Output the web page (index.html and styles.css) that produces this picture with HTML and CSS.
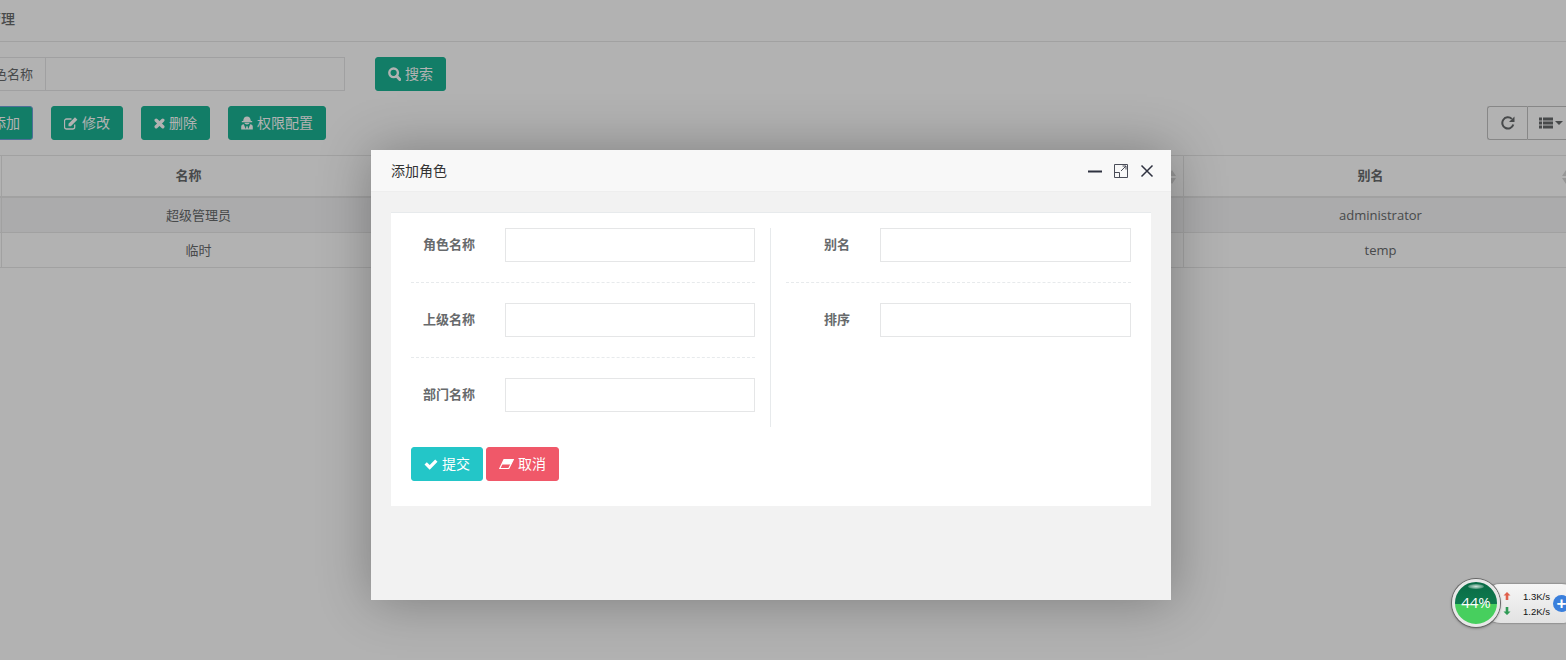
FILE: index.html
```html
<!DOCTYPE html>
<html lang="zh-CN">
<head>
<meta charset="utf-8">
<title>角色管理</title>
<link rel="stylesheet" href="styles.css">
</head>
<body>
<div class="page">
  <header class="page-head">角色管理</header>
  <form class="search-row">
    <div class="input-group">
      <span class="addon">角色名称</span>
      <span class="search-input"></span>
    </div>
    <button type="button" class="btn btn-primary">
      <svg class="ico ico-13" viewBox="0 0 13 14"><circle cx="5.600" cy="5.800" r="4.300" fill="none" stroke="currentColor" stroke-width="2.400"/><path d="M8.800 9.200l3 3.300" stroke="currentColor" stroke-width="3" stroke-linecap="round"/></svg>
      <span class="btn-text">搜索</span>
    </button>
  </form>
  <div class="toolbar">
    <div class="tool-left">
      <button type="button" class="btn btn-primary btn-focus">
        <svg class="ico ico-11" viewBox="0 0 11 14"><path d="M4 2.500h3v3h3.500v3H7v3H4v-3H.5v-3H4z" fill="currentColor"/></svg>
        <span class="btn-text">添加</span>
      </button>
      <button type="button" class="btn btn-primary">
        <svg class="ico" viewBox="0 0 14 14"><path d="M10.700 8.500V11a2 2 0 0 1-2 2H2.500a2 2 0 0 1-2-2V5a2 2 0 0 1 2-2h5" fill="none" stroke="currentColor" stroke-width="1.300"/><path d="M4.500 7.800L11 1.300l2.400 2.400-6.500 6.500H4.500z" fill="currentColor"/></svg>
        <span class="btn-text">修改</span>
      </button>
      <button type="button" class="btn btn-primary">
        <svg class="ico ico-11" viewBox="0 0 11 14"><path d="M2.200 4.200l6.600 6.600M8.800 4.200l-6.600 6.600" stroke="currentColor" stroke-width="3.400" stroke-linecap="round"/></svg>
        <span class="btn-text">删除</span>
      </button>
      <button type="button" class="btn btn-primary">
        <svg class="ico ico-12" viewBox="0 0 12 14"><path d="M2.200 5C2.400 1.800 3.800.5 6 .5s3.600 1.300 3.800 4.500h1.400v1.200H.8V5z" fill="currentColor"/><path d="M3.400 6.800h5.200c-.2 1-1.200 1.700-2.600 1.700s-2.400-.7-2.600-1.700z" fill="currentColor"/><path d="M.2 13.500v-2.800c0-1.400.9-2.300 2.600-2.500L4.700 13 5.600 10h.8l.9 3 1.900-4.800c1.700.2 2.600 1.100 2.600 2.500v2.800z" fill="currentColor"/></svg>
        <span class="btn-text">权限配置</span>
      </button>
    </div>
    <div class="tool-right">
      <button type="button" class="tool-btn tool-refresh">
        <svg class="ico" viewBox="0 0 14 14"><path d="M12.300 8.500A5.600 5.600 0 1 1 10.800 2.900" fill="none" stroke="currentColor" stroke-width="2"/><path d="M13.500 .5v5.500H8z" fill="currentColor"/></svg>
      </button>
      <button type="button" class="tool-btn tool-list">
        <svg class="ico" viewBox="0 0 14 14"><path d="M0 1.500h3v3H0zM4 1.500h10v3H4zM0 5.500h3v3H0zM4 5.500h10v3H4zM0 9.500h3v3H0zM4 9.500h10v3H4z" fill="currentColor"/></svg>
        <span class="caret"></span>
      </button>
    </div>
  </div>
  <table class="data-table">
    <colgroup>
      <col class="col-check"><col class="col-data"><col class="col-data"><col class="col-data"><col class="col-data">
    </colgroup>
    <thead>
      <tr>
        <th></th>
        <th><span class="th-label">名称</span></th>
        <th></th>
        <th><svg class="sort" viewBox="0 0 10 16"><path d="M5 1l4 6H1zM5 15l4-6H1z" fill="currentColor"/></svg></th>
        <th><span class="th-label">别名</span><svg class="sort" viewBox="0 0 10 16"><path d="M5 1l4 6H1zM5 15l4-6H1z" fill="currentColor"/></svg></th>
      </tr>
    </thead>
    <tbody>
      <tr><td></td><td class="cell-cjk">超级管理员</td><td></td><td></td><td>administrator</td></tr>
      <tr><td></td><td class="cell-cjk">临时</td><td></td><td></td><td>temp</td></tr>
    </tbody>
  </table>
</div>

<div class="shade"></div>

<section class="dialog">
  <div class="dialog-title">
    <span class="dialog-name">添加角色</span>
    <div class="dialog-tools">
      <svg class="tool-min" viewBox="0 0 14 14"><path d="M0 7.500h14" stroke="currentColor" stroke-width="2"/></svg>
      <svg class="tool-max" viewBox="0 0 14 14"><path d="M.5.500h13v13H.5zM.5 8.500h5v5M7 7l5-5M8.500 2H12v3.500" fill="none" stroke="currentColor" stroke-width="1"/></svg>
      <svg class="tool-close" viewBox="0 0 14 14"><path d="M1.500 1.500l11 11M12.500 1.500l-11 11" stroke="currentColor" stroke-width="1.500"/></svg>
    </div>
  </div>
  <div class="dialog-body">
    <div class="panel">
      <div class="form-cols">
        <div class="form-col form-col-left">
          <div class="field"><label>角色名称</label><span class="text-input"></span></div>
          <div class="field"><label>上级名称</label><span class="text-input"></span></div>
          <div class="field"><label>部门名称</label><span class="text-input"></span></div>
        </div>
        <div class="form-col form-col-right">
          <div class="field"><label>别名</label><span class="text-input"></span></div>
          <div class="field field-plain"><label>排序</label><span class="text-input"></span></div>
        </div>
      </div>
      <div class="form-actions">
        <button type="button" class="btn btn-info">
          <svg class="ico" viewBox="0 0 14 14"><path d="M.5 7.500l2.300-2.300 2.900 2.900 5.500-5.600 2.300 2.300-7.800 7.900z" fill="currentColor"/></svg>
          <span class="btn-text">提交</span>
        </button>
        <button type="button" class="btn btn-danger">
          <svg class="ico ico-15" viewBox="0 0 15 14"><path d="M5 2.500h9.300L9.800 11.500H.8z" fill="none" stroke="currentColor" stroke-width="1.200"/><path d="M5 2.500h9.300L11.800 7.500H2.800z" fill="currentColor"/></svg>
          <span class="btn-text">取消</span>
        </button>
      </div>
    </div>
  </div>
</section>

<aside class="speed-widget">
  <div class="speed-pill">
    <div class="speed-rates">
      <div class="rate"><svg class="rate-arrow rate-up" viewBox="0 0 8 8"><path d="M4 0l3.500 3.500H5.300V8H2.700V3.500H.5z" fill="currentColor"/></svg><span>1.3K/s</span></div>
      <div class="rate"><svg class="rate-arrow rate-down" viewBox="0 0 8 8"><path d="M4 8L.5 4.500h2.200V0h2.600v4.500h2.200z" fill="currentColor"/></svg><span>1.2K/s</span></div>
    </div>
    <span class="speed-plus">+</span>
  </div>
  <div class="speed-ball"><span class="speed-gloss"></span><span class="speed-text">44%</span></div>
</aside>
</body>
</html>
```
FILE: styles.css
```css
* { box-sizing: border-box; }
html, body { margin: 0; height: 660px; overflow: hidden; }
body {
  position: relative;
  width: 1566px;
  background: #fff;
  color: #676a6c;
  font-family: "Open Sans", "Noto Sans CJK SC", sans-serif;
  font-size: 13px;
}
.page { width: 1622px; margin-left: -41px; }
.page-head {
  height: 42px;
  border-bottom: 1px solid #e7e7e7;
  font-size: 14px;
  font-weight: 500;
  line-height: 38px;
}
.search-row { display: flex; gap: 30px; padding: 15px 0 0 9px; }
.input-group { display: flex; height: 34px; }
.addon {
  padding: 0 12px;
  border: 1px solid #e5e6e7;
  line-height: 32px;
  background: #fff;
}
.search-input { width: 299px; border: 1px solid #e5e6e7; border-left: 0; }
.btn {
  display: inline-flex;
  align-items: center;
  justify-content: center;
  gap: 4px;
  height: 34px;
  padding: 0 12px;
  border: 1px solid transparent;
  border-radius: 3px;
  font: inherit;
  font-size: 14px;
  color: #fff;
  white-space: nowrap;
}
.btn-text { line-height: 20px; padding-bottom: 1px; }
.btn-primary { background: #1ab394; border-color: #1ab394; }
.btn-info { background: #23c6c8; border-color: #23c6c8; }
.btn-danger { background: #f05869; border-color: #f05869; }
.btn-focus { border-color: #6f9fd8; }
.ico { width: 14px; height: 14px; flex: none; }
.ico-11 { width: 11px; }
.ico-12 { width: 12px; }
.ico-13 { width: 13px; }
.ico-15 { width: 15px; }
.toolbar {
  display: flex;
  justify-content: space-between;
  align-items: center;
  padding: 15px 0 0 5px;
}
.tool-left { display: flex; gap: 18px; }
.tool-right { display: flex; }
.tool-btn {
  display: inline-flex;
  align-items: center;
  justify-content: center;
  height: 34px;
  border: 1px solid #c2c2c2;
  background: #fff;
  color: #676a6c;
  padding: 0;
}
.tool-refresh { width: 40px; border-radius: 3px 0 0 3px; border-right: 0; }
.tool-list { width: 54px; border-radius: 0 3px 3px 0; gap: 2px; justify-content: flex-start; padding-left: 11px; }
.caret {
  width: 0;
  height: 0;
  border-left: 4px solid transparent;
  border-right: 4px solid transparent;
  border-top: 4px solid #676a6c;
}
.data-table {
  width: 1618px;
  margin: 15px 0 0 1px;
  table-layout: fixed;
  border-collapse: separate;
  border-spacing: 0;
  border-top: 1px solid #e7e7e7;
}
.col-check { width: 42px; }
.col-data { width: 394px; }
.data-table th, .data-table td {
  border-right: 1px solid #e7e7e7;
  text-align: center;
  padding: 0;
}
.data-table th {
  position: relative;
  height: 42px;
  border-bottom: 2px solid #e7e7e7;
  font-weight: 700;
  padding: 0 20px 4px 0;
}
.data-table td { height: 35px; border-bottom: 1px solid #e7e7e7; }
.data-table td.cell-cjk { padding-bottom: 2px; }
.data-table tbody tr:first-child td { background: #f5f5f6; }
.th-label { color: #676a6c; }
.sort {
  position: absolute;
  right: 6px;
  top: 13px;
  width: 10px;
  height: 16px;
  color: #d8d8d8;
}
.shade { position: absolute; inset: 0; background: rgba(0, 0, 0, .3); }
.dialog {
  position: absolute;
  left: 371px;
  top: 150px;
  width: 800px;
  height: 450px;
  display: flex;
  flex-direction: column;
  background: #f2f2f2;
  box-shadow: 1px 1px 50px rgba(0, 0, 0, .3);
}
.dialog-title {
  display: flex;
  align-items: center;
  justify-content: space-between;
  flex: none;
  height: 42px;
  padding: 0 17px 0 20px;
  background: #f8f8f8;
  border-bottom: 1px solid #eee;
  color: #333;
  font-family: "Noto Sans CJK SC", sans-serif;
  font-size: 14px;
}
.dialog-name { padding-bottom: 2px; }
.dialog-tools { display: flex; align-items: center; gap: 12px; color: #2f3240; }
.dialog-tools svg { display: block; width: 14px; height: 14px; }
.tool-max { color: #4a4d58; }
.dialog-body { flex: 1; padding: 20px 20px 0; }
.panel {
  padding: 15px 20px 25px;
  background: #fff;
  border-top: 1px solid #e7eaec;
}
.form-cols { display: flex; }
.form-col-left { width: 360px; padding-right: 15px; border-right: 1px solid #e7eaec; }
.form-col-right { flex: 1; padding-left: 15px; }
.field {
  display: flex;
  align-items: center;
  gap: 30px;
  padding-bottom: 20px;
  margin-bottom: 20px;
  border-bottom: 1px dashed #e7eaec;
}
.form-col-left .field:last-child { padding-bottom: 15px; margin-bottom: 0; border-bottom: 0; }
.field-plain { padding-bottom: 0; margin-bottom: 0; border-bottom: 0; }
.field label {
  width: 64px;
  padding-bottom: 4px;
  text-align: right;
  font-weight: 700;
  font-size: 13px;
  color: #676a6c;
}
.text-input {
  flex: 1;
  height: 34px;
  border: 1px solid #e5e6e7;
  background: #fff;
}
.form-actions { display: flex; gap: 3px; margin-top: 20px; }
.speed-widget { position: absolute; left: 1451px; top: 579px; width: 115px; height: 48px; }
.speed-pill {
  position: absolute;
  left: 30px;
  top: 5px;
  width: 100px;
  height: 39px;
  display: flex;
  align-items: center;
  padding-left: 22px;
  border-radius: 20px;
  background: linear-gradient(#f6f6f6, #e2e2e2);
  box-shadow: 0 0 2px rgba(0, 0, 0, .6);
}
.speed-rates { display: flex; flex-direction: column; gap: 3px; width: 47px; }
.rate {
  display: flex;
  align-items: center;
  justify-content: space-between;
  height: 12px;
  font-family: "Liberation Sans", sans-serif;
  font-size: 9.500px;
  color: #111;
}
.rate-arrow { width: 8px; height: 8px; }
.rate-up { color: #e0604c; }
.rate-down { color: #2f9a55; }
.speed-plus {
  display: flex;
  align-items: center;
  justify-content: center;
  width: 17px;
  height: 17px;
  margin-left: 3px;
  border-radius: 50%;
  background: #3a7fdc;
  color: #fff;
  font-family: "Liberation Sans", sans-serif;
  font-size: 17px;
  font-weight: 700;
  line-height: 1;
}
.speed-ball {
  position: absolute;
  left: 1px;
  top: 0;
  width: 48px;
  height: 48px;
  display: flex;
  align-items: center;
  justify-content: center;
  padding-bottom: 3px;
  border: 3px solid #e8e8e8;
  border-radius: 50%;
  background: linear-gradient(#0a6b46 0, #0e7a4e 52%, #47cf5e 52%, #47cf5e 100%);
  box-shadow: 0 0 0 1px #666, 0 1px 3px rgba(0, 0, 0, .5);
}
.speed-gloss {
  position: absolute;
  left: 13px;
  top: 2px;
  width: 16px;
  height: 5px;
  border-radius: 50%;
  background: radial-gradient(rgba(255, 255, 255, .8), rgba(255, 255, 255, 0));
}
.speed-text {
  position: relative;
  color: #fff;
  font-family: "Open Sans", sans-serif;
  font-size: 15px;
}
```
